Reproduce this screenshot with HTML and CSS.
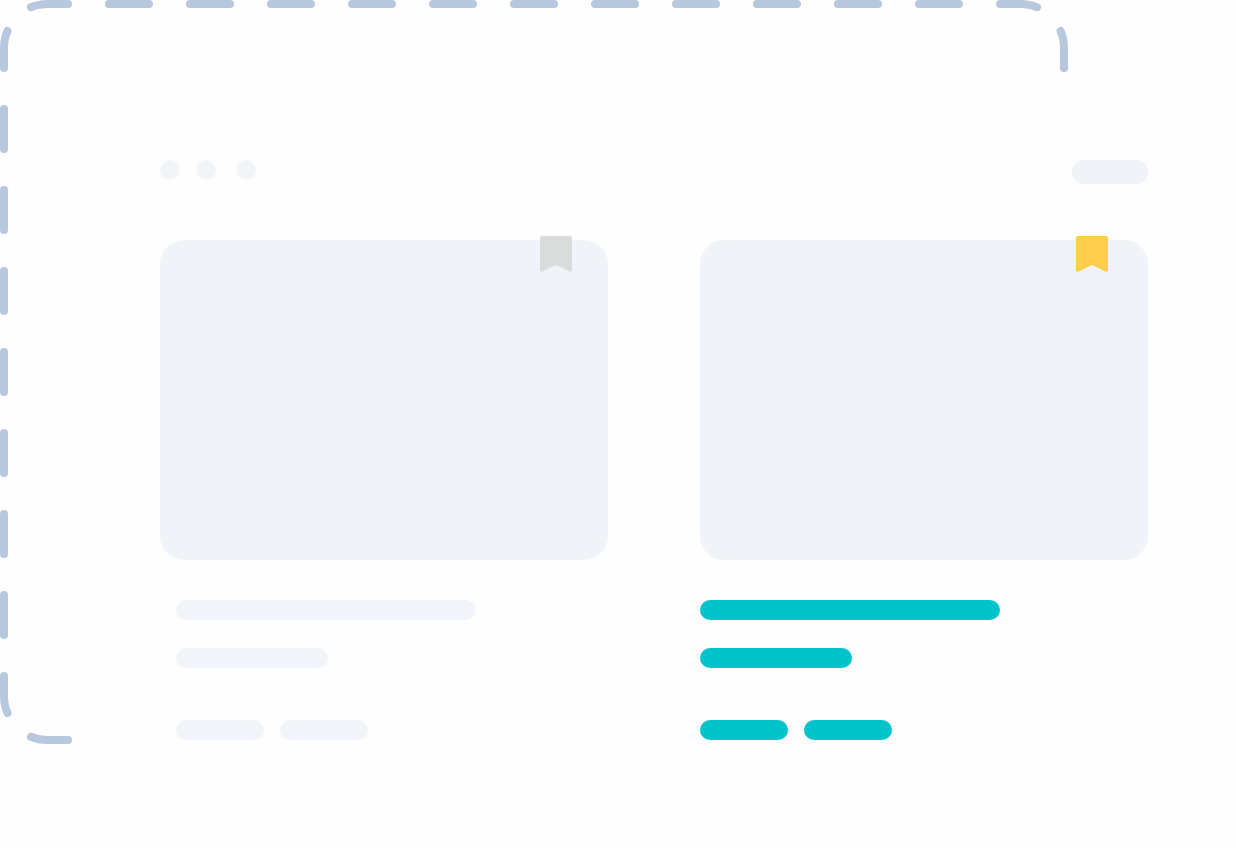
FILE: index.html
```html
<!DOCTYPE html>
<html lang="en">
<head>
<meta charset="utf-8">
<meta name="viewport" content="width=device-width, initial-scale=1">
<title>Saved cards</title>
<link rel="stylesheet" href="styles.css">
</head>
<body>
<svg class="outline" width="1068" height="744" viewBox="0 0 1068 744" aria-hidden="true">
  <path d="M109 4h40M190 4h40M271 4h40M352 4h40M433 4h40M514 4h40M595 4h40M676 4h40M757 4h40M838 4h40M919 4h40"/>
  <path d="M4 109v40M4 190v40M4 271v40M4 352v40M4 433v40M4 514v40M4 595v40"/>
  <path d="M68 4H48Q38.500 4 31 7.200M7.500 31Q4 38.500 4 48V68"/>
  <path d="M1000 4h20Q1029.500 4 1037 7.200M1060.500 31Q1064 38.500 1064 48V68"/>
  <path d="M4 676v20Q4 705.500 7.500 713M31 736.800Q38.500 740 48 740H68"/>
</svg>
<main class="page">
  <header class="toolbar">
    <div class="dots">
      <span class="dot"></span>
      <span class="dot"></span>
      <span class="dot dot-last"></span>
    </div>
    <span class="action"></span>
  </header>
  <section class="cards">
    <article class="card">
      <div class="cover">
        <svg class="bookmark" viewBox="0 0 32 36" aria-hidden="true"><path d="M2 0H30Q32 0 32 2V34.500Q32 36.500 30 35.700L17 29.500Q16 29 15 29.500L2 35.700Q0 36.500 0 34.500V2Q0 0 2 0Z"/></svg>
      </div>
      <div class="details">
        <span class="line line-title"></span>
        <span class="line line-subtitle"></span>
        <div class="tags"><span class="line tag"></span><span class="line tag"></span></div>
      </div>
    </article>
    <article class="card card-saved">
      <div class="cover">
        <svg class="bookmark" viewBox="0 0 32 36" aria-hidden="true"><path d="M2 0H30Q32 0 32 2V34.500Q32 36.500 30 35.700L17 29.500Q16 29 15 29.500L2 35.700Q0 36.500 0 34.500V2Q0 0 2 0Z"/></svg>
      </div>
      <div class="details">
        <span class="line line-title"></span>
        <span class="line line-subtitle"></span>
        <div class="tags"><span class="line tag"></span><span class="line tag"></span></div>
      </div>
    </article>
  </section>
</main>
</body>
</html>
```

FILE: styles.css
```css
* {
  box-sizing: border-box;
}

body {
  margin: 0;
  background: #fefefe;
  font-family: "Liberation Sans", sans-serif;
}

.outline {
  position: absolute;
  top: 0;
  left: 0;
  fill: none;
  stroke: #b7c8de;
  stroke-width: 8;
  stroke-linecap: round;
}

.page {
  padding: 160px 88px 108px 160px;
}

.toolbar {
  display: flex;
  justify-content: space-between;
  align-items: flex-start;
  margin-bottom: 56px;
}

.dots {
  display: flex;
  gap: 16px;
}

.dot {
  width: 20px;
  height: 20px;
  border-radius: 50%;
  background: #f2f5f8;
}

.dot-last {
  margin-left: 4px;
}

.action {
  width: 76px;
  height: 24px;
  border-radius: 12px;
  background: #f0f4f8;
}

.cards {
  display: grid;
  grid-template-columns: 1fr 1fr;
  gap: 92px;
}

.cover {
  position: relative;
  aspect-ratio: 7 / 5;
  border-radius: 24px;
  background: #f0f4f8;
}

.bookmark {
  position: absolute;
  top: -4px;
  right: 36px;
  width: 32px;
  height: 36px;
  fill: #dadcdc;
}

.details {
  display: flex;
  flex-direction: column;
  gap: 28px;
  padding: 40px 16px 0;
}

.line {
  height: 20px;
  border-radius: 10px;
  background: #f1f4f8;
}

.line-title {
  width: 300px;
}

.line-subtitle {
  width: 152px;
}

.tags {
  display: flex;
  gap: 16px;
  margin-top: 24px;
}

.tag {
  width: 88px;
}

.card-saved .bookmark {
  right: 40px;
  fill: #ffce4d;
}

.card-saved .details {
  padding-left: 0;
}

.card-saved .line {
  background: #00c4ca;
}
```
